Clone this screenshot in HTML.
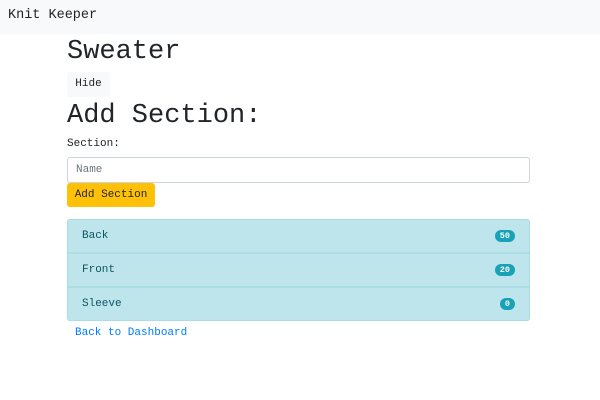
<!DOCTYPE html>
<html><head><style>
body{margin:0;width:600px;height:400px;background:#fff;font-family:"Liberation Mono",monospace;color:#212529;position:relative;overflow:hidden}
.nav{position:absolute;left:0;top:0;width:600px;height:34px;background:#f8f9fa}
.nav span{position:absolute;left:8px;top:8px;font-size:13.5px}
.abs{position:absolute;white-space:nowrap}
.h1{font-size:27px;line-height:1}
.item{position:absolute;left:67px;width:461px;height:32px;background:#bee5eb;border:1px solid #abdde5;border-radius:3px;font-size:11px;color:#0c5460}
.item span.t{position:absolute;left:14px;top:10px}
.badge{position:absolute;right:14px;top:10px;background:#17a2b8;color:#fff;font-size:8.5px;font-weight:bold;border-radius:7px;height:12px;line-height:12px;padding:0 5px}
</style></head><body>
<div class="nav"><span>Knit Keeper</span></div>
<div class="abs h1" style="left:67px;top:39px">Sweater</div>
<div class="abs" style="left:67px;top:72px;width:43px;height:25px;background:#f8f9fa;border-radius:3px;font-size:11px;line-height:25px;text-align:center">Hide</div>
<div class="abs h1" style="left:67px;top:103px">Add Section:</div>
<div class="abs" style="left:67px;top:138px;font-size:11px">Section:</div>
<div class="abs" style="left:67px;top:157px;width:461px;height:24px;border:1px solid #ced4da;border-radius:3px;font-size:11px;line-height:25px;color:#6c757d"><span style="padding-left:8px">Name</span></div>
<div class="abs" style="left:67px;top:183px;width:88px;height:24px;background:#ffc107;border-radius:3px;font-size:11px;line-height:25px;text-align:center">Add Section</div>
<div class="item" style="top:219px;border-radius:3px 3px 0 0"><span class="t">Back</span><span class="badge">50</span></div>
<div class="item" style="top:253px;border-radius:0"><span class="t">Front</span><span class="badge">20</span></div>
<div class="item" style="top:287px;border-radius:0 0 3px 3px"><span class="t">Sleeve</span><span class="badge">0</span></div>
<div class="abs" style="left:75px;top:327px;font-size:11px;color:#007bff">Back to Dashboard</div>
</body></html>
